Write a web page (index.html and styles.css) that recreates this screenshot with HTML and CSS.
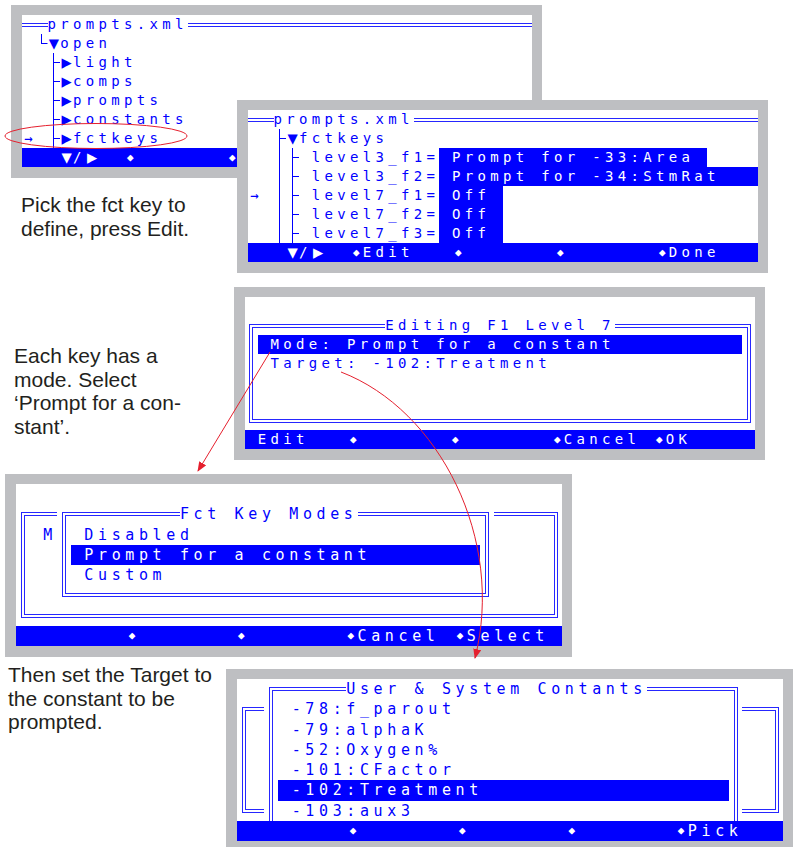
FILE: index.html
```html
<!DOCTYPE html>
<html lang="en">
<head>
    <meta charset="UTF-8">
    <meta name="viewport" content="width=device-width, initial-scale=1.0">
    <title>Defining a function key</title>
    <link rel="stylesheet" href="styles.css">
</head>
<body>
<div class="page">
    <p class="note note-pick">Pick the fct key to<br>define, press Edit.</p>
    <p class="note note-mode">Each key has a<br>mode. Select<br>‘Prompt for a con-<br>stant’.</p>
    <p class="note note-target">Then set the Target to<br>the constant to be<br>prompted.</p>

    <!-- tree of prompts.xml -->
    <div class="lcd lcd-tree">
        <div class="screen">
            <div class="rule"></div>
            <div class="rows">
<div class="row">  <span class="ttl">prompts.xml</span></div>
<div class="row"> <i class="c corner"></i><i class="c tri">▼</i>open</div>
<div class="row">  <i class="c tee"></i><i class="c tri">▶</i>light</div>
<div class="row">  <i class="c tee"></i><i class="c tri">▶</i>comps</div>
<div class="row">  <i class="c tee"></i><i class="c tri">▶</i>prompts</div>
<div class="row">  <i class="c tee"></i><i class="c tri">▶</i>constants</div>
<div class="row"><i class="c">→</i> <i class="c tee"></i><i class="c tri">▶</i>fctkeys</div>
<div class="row bar">   <i class="c tri">▼</i>/<i class="c tri">▶</i>  <i class="c dia">◆</i>       <i class="c dia">◆</i>       <i class="c dia">◆</i>       <i class="c dia">◆</i></div>
            </div>
        </div>
    </div>

    <!-- fctkeys opened -->
    <div class="lcd lcd-keys">
        <div class="screen">
            <div class="rule"></div>
            <div class="rows">
<div class="row">  <span class="ttl">prompts.xml</span></div>
<div class="row">  <i class="c tee"></i><i class="c tri">▼</i>fctkeys</div>
<div class="row">  <i class="c vert"></i><i class="c tee"></i> level3_f1=<span class="hi"> Prompt for -33:Area </span></div>
<div class="row">  <i class="c vert"></i><i class="c tee"></i> level3_f2=<span class="hi"> Prompt for -34:StmRat   </span></div>
<div class="row"><i class="c">→</i> <i class="c vert"></i><i class="c tee"></i> level7_f1=<span class="hi"> Off </span></div>
<div class="row">  <i class="c vert"></i><i class="c tee"></i> level7_f2=<span class="hi"> Off </span></div>
<div class="row">  <i class="c vert"></i><i class="c tee"></i> level7_f3=<span class="hi"> Off </span></div>
<div class="row bar">   <i class="c tri">▼</i>/<i class="c tri">▶</i>  <i class="c dia">◆</i>Edit   <i class="c dia">◆</i>       <i class="c dia">◆</i>       <i class="c dia">◆</i>Done</div>
            </div>
        </div>
    </div>

    <!-- editing dialog -->
    <div class="lcd lcd-edit">
        <div class="screen">
            <div class="box box-back"></div>
            <div class="rows">
<div class="row"></div>
<div class="row">           <span class="ttl">Editing F1 Level 7</span></div>
<div class="row"> <span class="hi"> Mode: Prompt for a constant          </span></div>
<div class="row">  Target: -102:Treatment</div>
<div class="row"></div>
<div class="row"></div>
<div class="row"></div>
<div class="row bar"> Edit   <i class="c dia">◆</i>       <i class="c dia">◆</i>       <i class="c dia">◆</i>Cancel <i class="c dia">◆</i>OK</div>
            </div>
        </div>
    </div>

    <!-- mode picker -->
    <div class="lcd lcd-lg lcd-modes">
        <div class="screen">
            <div class="box box-back"></div>
            <div class="cover cover-modes"></div>
            <div class="box box-modes"></div>
            <div class="rows">
<div class="row"></div>
<div class="row">            <span class="ttl">Fct Key Modes</span></div>
<div class="row">  M  Disabled</div>
<div class="row">    <span class="hi"> Prompt for a constant        </span></div>
<div class="row">     Custom</div>
<div class="row"></div>
<div class="row"></div>
<div class="row bar">        <i class="c dia">◆</i>       <i class="c dia">◆</i>       <i class="c dia">◆</i>Cancel <i class="c dia">◆</i>Select</div>
            </div>
        </div>
    </div>

    <!-- constant picker -->
    <div class="lcd lcd-lg lcd-list">
        <div class="screen">
            <div class="box box-back"></div>
            <div class="cover cover-list"></div>
            <div class="box box-list"></div>
            <div class="rows">
<div class="row">        <span class="ttl">User &amp; System Contants</span></div>
<div class="row">    -78:f_parout</div>
<div class="row">    -79:alphaK</div>
<div class="row">    -52:Oxygen%</div>
<div class="row">    -101:CFactor</div>
<div class="row">   <span class="hi"> -102:Treatment                  </span></div>
<div class="row">    -103:aux3</div>
<div class="row bar">        <i class="c dia">◆</i>       <i class="c dia">◆</i>       <i class="c dia">◆</i>       <i class="c dia">◆</i>Pick</div>
            </div>
        </div>
    </div>

    <svg class="marks" width="793" height="847" viewBox="0 0 793 847">
        <defs>
            <marker id="head" viewBox="0 0 10 8" refX="9" refY="4" markerWidth="10" markerHeight="8" markerUnits="userSpaceOnUse" orient="auto">
                <path d="M0,0 L10,4 L0,8 Z" fill="#e5202e"/>
            </marker>
        </defs>
        <ellipse cx="96" cy="136" rx="91" ry="12.5" fill="none" stroke="#e5202e" stroke-width="1"/>
        <path d="M270,352 L198,471" fill="none" stroke="#e5202e" stroke-width="1" marker-end="url(#head)"/>
        <path d="M341,372 C440,410 505,540 475,658" fill="none" stroke="#e5202e" stroke-width="1" marker-end="url(#head)"/>
    </svg>
</div>
</body>
</html>
```

FILE: styles.css
```css
body {
    margin: 0;
    background: #fff;
}

.page {
    position: relative;
    width: 793px;
    height: 847px;
    overflow: hidden;
    font-family: "Liberation Sans", Arial, sans-serif;
}

/* captions */
.note {
    position: absolute;
    margin: 0;
    font-size: 21px;
    line-height: 23.5px;
    color: #231f20;
}
.note-pick { left: 21px; top: 193px; }
.note-mode { left: 14px; top: 344px; }
.note-target { left: 8px; top: 663px; }

/* lcd screens, one char cell = --p wide, --r high */
.lcd {
    --p: 12.75px;
    --r: 19px;
    --ink: #0000ff;
    --line: #2626ff;
    position: absolute;
    padding: 10px 10px 11px 11px;
    background: #bebfc2;
    font-family: "DejaVu Sans Mono", monospace;
    font-size: 14px;
    line-height: 19px;
    letter-spacing: 4.32px;
}

.lcd-lg {
    --p: 13.66px;
    --r: 20.25px;
    font-size: 15px;
    line-height: 20.25px;
    letter-spacing: 4.63px;
}

.lcd-tree { left: 11px; top: 5px; }
.lcd-keys { left: 237px; top: 100px; }
.lcd-edit { left: 234px; top: 287px; }
.lcd-modes { left: 5px; top: 474px; }
.lcd-list { left: 226px; top: 669px; }

.screen {
    position: relative;
    width: calc(var(--p) * 40);
    height: calc(var(--r) * 8);
    background: #fff;
    color: var(--ink);
    overflow: hidden;
}

.rows { position: relative; }

.row {
    height: var(--r);
    white-space: pre;
}

.bar {
    background: var(--ink);
    color: #fff;
}

.ttl { background: #fff; }

.hi {
    display: inline-block;
    vertical-align: top;
    height: var(--r);
    background: var(--ink);
    color: #fff;
}

.c {
    display: inline-block;
    vertical-align: top;
    width: var(--p);
    height: var(--r);
    font-style: normal;
    text-align: center;
    letter-spacing: 0;
}

.tri { font-size: 17px; }
.dia { font-size: 11px; }

.vert {
    background: linear-gradient(var(--ink), var(--ink)) center top / 1px 100% no-repeat;
}
.tee {
    background:
        linear-gradient(var(--ink), var(--ink)) center top / 1px 100% no-repeat,
        linear-gradient(var(--ink), var(--ink)) right center / 50% 1px no-repeat;
}
.corner {
    background:
        linear-gradient(var(--ink), var(--ink)) center top / 1px 50% no-repeat,
        linear-gradient(var(--ink), var(--ink)) right center / 50% 1px no-repeat;
}

/* double line frames */
.rule {
    position: absolute;
    left: 0;
    right: 0;
    top: calc(var(--r) / 2 - 2px);
    border-top: 4px double var(--line);
}

.box {
    position: absolute;
    box-sizing: border-box;
    border: 4px double var(--line);
}

.box-back {
    left: calc(var(--p) * 0.5 - 2px);
    top: calc(var(--r) * 1.5 - 2px);
    width: calc(var(--p) * 39 + 4px);
    height: calc(var(--r) * 5 + 4px);
}

.cover {
    position: absolute;
    background: #fff;
}

.cover-modes {
    left: calc(var(--p) * 3);
    top: var(--r);
    width: calc(var(--p) * 32);
    height: calc(var(--r) * 5);
}
.box-modes {
    left: calc(var(--p) * 3.5 - 2px);
    top: calc(var(--r) * 1.5 - 2px);
    width: calc(var(--p) * 31 + 4px);
    height: calc(var(--r) * 4 + 4px);
}

.cover-list {
    left: calc(var(--p) * 2);
    top: 0;
    width: calc(var(--p) * 35);
    height: calc(var(--r) * 7);
}
.box-list {
    left: calc(var(--p) * 2.5 - 2px);
    top: calc(var(--r) * 0.5 - 2px);
    width: calc(var(--p) * 34 + 4px);
    height: calc(var(--r) * 7.2);
}

.marks {
    position: absolute;
    left: 0;
    top: 0;
    pointer-events: none;
}
```
